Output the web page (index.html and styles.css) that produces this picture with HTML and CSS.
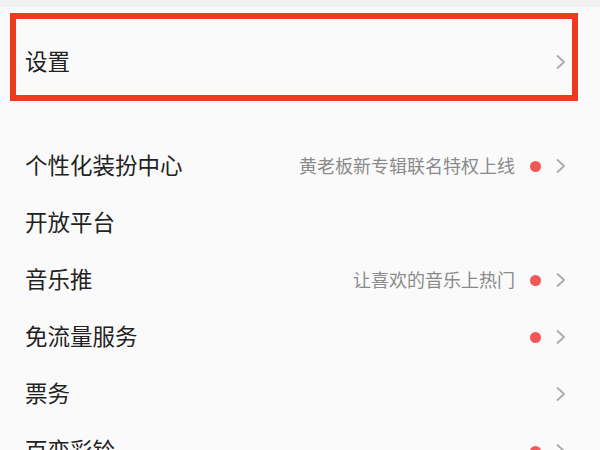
FILE: index.html
```html
<!DOCTYPE html>
<html lang="zh-CN">
<head>
<meta charset="utf-8">
<link rel="stylesheet" href="styles.css">
</head>
<body>
<div class="topbar"></div>
<div class="group group-settings">
  <div class="row">
    <span class="label">设置</span>
    <span class="right">
      <svg class="chev" width="10" height="14" viewBox="0 0 10 14"><polyline points="1.5,1 8,7 1.5,13" fill="none" stroke="#aaaaaa" stroke-width="1.8" stroke-linecap="round" stroke-linejoin="round"/></svg>
    </span>
  </div>
  <div class="highlight"></div>
</div>
<div class="group group-list">
  <div class="row">
    <span class="label">个性化装扮中心</span>
    <span class="right">
      <span class="sub">黄老板新专辑联名特权上线</span>
      <span class="dot"></span>
      <svg class="chev" width="10" height="14" viewBox="0 0 10 14"><polyline points="1.5,1 8,7 1.5,13" fill="none" stroke="#aaaaaa" stroke-width="1.8" stroke-linecap="round" stroke-linejoin="round"/></svg>
    </span>
  </div>
  <div class="row">
    <span class="label">开放平台</span>
  </div>
  <div class="row">
    <span class="label">音乐推</span>
    <span class="right">
      <span class="sub">让喜欢的音乐上热门</span>
      <span class="dot"></span>
      <svg class="chev" width="10" height="14" viewBox="0 0 10 14"><polyline points="1.5,1 8,7 1.5,13" fill="none" stroke="#aaaaaa" stroke-width="1.8" stroke-linecap="round" stroke-linejoin="round"/></svg>
    </span>
  </div>
  <div class="row">
    <span class="label">免流量服务</span>
    <span class="right">
      <span class="dot"></span>
      <svg class="chev" width="10" height="14" viewBox="0 0 10 14"><polyline points="1.5,1 8,7 1.5,13" fill="none" stroke="#aaaaaa" stroke-width="1.8" stroke-linecap="round" stroke-linejoin="round"/></svg>
    </span>
  </div>
  <div class="row">
    <span class="label">票务</span>
    <span class="right">
      <svg class="chev" width="10" height="14" viewBox="0 0 10 14"><polyline points="1.5,1 8,7 1.5,13" fill="none" stroke="#aaaaaa" stroke-width="1.8" stroke-linecap="round" stroke-linejoin="round"/></svg>
    </span>
  </div>
  <div class="row">
    <span class="label">百变彩铃</span>
    <span class="right">
      <span class="dot"></span>
      <svg class="chev" width="10" height="14" viewBox="0 0 10 14"><polyline points="1.5,1 8,7 1.5,13" fill="none" stroke="#aaaaaa" stroke-width="1.8" stroke-linecap="round" stroke-linejoin="round"/></svg>
    </span>
  </div>
</div>
</body>
</html>
```

FILE: styles.css
```css
html, body {
  margin: 0;
  padding: 0;
}
body {
  width: 600px;
  height: 450px;
  overflow: hidden;
  background: #fafafa;
  font-family: "Noto Sans CJK SC", "Noto Sans", sans-serif;
  color: #222222;
}
.topbar {
  height: 7px;
  background: #f1f1f1;
}
.group {
  position: relative;
}
.group-settings {
  padding-top: 25px;
}
.group-list {
  margin-top: 47px;
}
.row {
  height: 57px;
  display: flex;
  align-items: center;
  justify-content: space-between;
  padding: 0 34px 0 25px;
}
.label {
  font-size: 22.5px;
  line-height: 1;
  color: #222222;
}
.right {
  display: flex;
  align-items: center;
  padding-top: 3px;
}
.sub {
  font-size: 18px;
  line-height: 1;
  color: #8a8a8a;
  margin-right: 15px;
  margin-top: -3px;
}
.dot {
  width: 11px;
  height: 11px;
  border-radius: 50%;
  background: #f25757;
  margin-right: 15px;
}
.chev {
  display: block;
}
.highlight {
  position: absolute;
  left: 10px;
  top: 6px;
  width: 556px;
  height: 76px;
  border: 6px solid #ef3a1e;
}
```
